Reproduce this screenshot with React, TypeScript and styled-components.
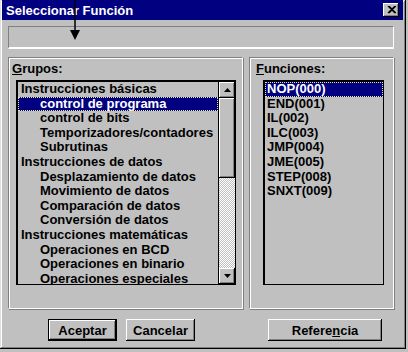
import styled, { createGlobalStyle } from 'styled-components'

const Global = createGlobalStyle`
  body {
    margin: 0;
    background: #c0c0c0;
    font-family: "Liberation Sans", Arial, sans-serif;
  }
`

const Window = styled.div`
  position: relative;
  width: 406px;
  height: 349px;
  background: #c0c0c0;
  box-shadow: inset -1px -1px 0 #000, inset 1px 1px 0 #dfdfdf, inset -2px -2px 0 #808080, inset 2px 2px 0 #fff;
  display: flex;
  flex-direction: column;
`

const TitleBar = styled.div`
  height: 20px;
  margin: 0 3px 0 2px;
  background: #000080;
  display: flex;
  align-items: center;
  justify-content: space-between;
  padding: 0 4px 0 4px;
  color: #fff;
  font-weight: bold;
  font-size: 13px;
`

const CloseBtn = styled.div`
  width: 16px;
  height: 14px;
  background: #c0c0c0;
  box-shadow: inset -1px -1px 0 #000, inset 1px 1px 0 #fff, inset -2px -2px 0 #808080;
  display: flex;
  align-items: center;
  justify-content: center;
`

const Field = styled.div`
  margin: 6px 0 0 8px;
  width: 386px;
  height: 23px;
  box-sizing: border-box;
  border-top: 1px solid #808080;
  border-left: 1px solid #808080;
  border-right: 1px solid #fff;
  border-bottom: 2px solid #fff;
`

const PanelRow = styled.div`
  display: flex;
  gap: 6px;
  margin: 8px 0 0 8px;
`

const Panel = styled.div<{ $w: number; $pad: number; $listPad: number }>`
  width: ${p => p.$w}px;
  height: 252px;
  box-sizing: border-box;
  border-top: 1px solid #808080;
  border-left: 1px solid #808080;
  border-right: 1px solid #fff;
  border-bottom: 1px solid #fff;
  box-shadow: inset 1px 1px 0 #fff, 1px 1px 0 #808080;
  padding: 4px 0 0 ${p => p.$pad}px;
  display: flex;
  flex-direction: column;
  & > div:last-child {
    margin-left: ${p => p.$listPad}px;
  }
`

const Label = styled.div`
  font-size: 13px;
  font-weight: bold;
  line-height: 14px;
  height: 18px;
  color: #000;
  u { text-decoration: underline; }
`

const ListBox = styled.div<{ $w: number }>`
  width: ${p => p.$w}px;
  height: 205px;
  box-sizing: border-box;
  border-top: 2px solid #000;
  border-left: 2px solid #000;
  border-right: 1px solid #000;
  border-bottom: 1px solid #000;
  display: flex;
  overflow: hidden;
`

const Items = styled.ul`
  list-style: none;
  margin: 0;
  padding: 0;
  flex: 1;
  min-width: 0;
`

const Item = styled.li<{ $indent: number; $sel?: boolean }>`
  height: 14.6px;
  line-height: 14.6px;
  font-size: 13px;
  font-weight: bold;
  white-space: nowrap;
  padding-left: ${p => p.$indent}px;
  box-sizing: border-box;
  background: ${p => (p.$sel ? '#000080' : 'transparent')};
  color: ${p => (p.$sel ? '#fff' : '#000')};
  outline: ${p => (p.$sel ? '1px dotted #e8e8a0' : 'none')};
  outline-offset: -1px;
`

const ScrollBar = styled.div`
  width: 16px;
  display: flex;
  flex-direction: column;
  border-left: 1px solid #000;
`

const ArrowBtn = styled.div`
  height: 16px;
  background: #c0c0c0;
  box-shadow: inset -1px -1px 0 #000, inset 1px 1px 0 #fff, inset -2px -2px 0 #808080;
  display: flex;
  align-items: center;
  justify-content: center;
`

const Thumb = styled.div`
  height: 80px;
  background: #c0c0c0;
  box-shadow: inset -1px -1px 0 #000, inset 1px 1px 0 #fff, inset -2px -2px 0 #808080;
`

const Track = styled.div`
  flex: 1;
  background: repeating-conic-gradient(#fff 0 25%, #c0c0c0 0 50%) 0 0 / 2px 2px;
`

const ButtonRow = styled.div`
  display: flex;
  margin: 10px 0 0 48px;
`

const Button = styled.div<{ $w: number; $gap: number; $def?: boolean }>`
  width: ${p => p.$w}px;
  height: 22px;
  margin-left: ${p => p.$gap}px;
  box-sizing: border-box;
  display: flex;
  align-items: center;
  justify-content: center;
  font-size: 13px;
  font-weight: bold;
  color: #000;
  background: #c0c0c0;
  box-shadow: ${p =>
    p.$def
      ? 'inset 0 0 0 1px #000, inset -2px -2px 0 #000, inset 2px 2px 0 #fff, inset -3px -3px 0 #808080'
      : 'inset -1px -1px 0 #000, inset 1px 1px 0 #fff, inset -2px -2px 0 #808080'};
`

const Pointer = styled.svg`
  position: absolute;
  left: 68px;
  top: 0;
`

const groups: [string, number][] = [
  ['Instrucciones básicas', 3],
  ['control de programa', 22],
  ['control de bits', 22],
  ['Temporizadores/contadores', 22],
  ['Subrutinas', 22],
  ['Instrucciones de datos', 3],
  ['Desplazamiento de datos', 22],
  ['Movimiento de datos', 22],
  ['Comparación de datos', 22],
  ['Conversión de datos', 22],
  ['Instrucciones matemáticas', 3],
  ['Operaciones en BCD', 22],
  ['Operaciones en binario', 22],
  ['Operaciones especiales', 22],
]

const funcs = ['NOP(000)', 'END(001)', 'IL(002)', 'ILC(003)', 'JMP(004)', 'JME(005)', 'STEP(008)', 'SNXT(009)']

export default function App() {
  return (
    <>
      <Global />
      <Window>
        <TitleBar>
          <span>Seleccionar Función</span>
          <CloseBtn>
            <svg width="9" height="8" viewBox="0 0 9 8">
              <path d="M1 0 L8 7 M2 0 L9 7 M8 0 L1 7 M9 0 L2 7" stroke="#000" strokeWidth="1.2" />
            </svg>
          </CloseBtn>
        </TitleBar>
        <Field />
        <PanelRow>
          <Panel $w={235} $pad={3} $listPad={4}>
            <Label><u>G</u>rupos:</Label>
            <ListBox $w={220}>
              <Items>
                {groups.map(([t, ind], i) => (
                  <Item key={t} $indent={ind} $sel={i === 1}>{t}</Item>
                ))}
              </Items>
              <ScrollBar>
                <ArrowBtn>
                  <svg width="7" height="4" viewBox="0 0 7 4"><path d="M3.5 0 L7 4 L0 4 Z" fill="#000" /></svg>
                </ArrowBtn>
                <Thumb />
                <Track />
                <ArrowBtn>
                  <svg width="7" height="4" viewBox="0 0 7 4"><path d="M0 0 L7 0 L3.5 4 Z" fill="#000" /></svg>
                </ArrowBtn>
              </ScrollBar>
            </ListBox>
          </Panel>
          <Panel $w={145} $pad={6} $listPad={7}>
            <Label><u>F</u>unciones:</Label>
            <ListBox $w={121}>
              <Items>
                {funcs.map((t, i) => (
                  <Item key={t} $indent={2} $sel={i === 0}>{t}</Item>
                ))}
              </Items>
            </ListBox>
          </Panel>
        </PanelRow>
        <ButtonRow>
          <Button $w={69} $gap={0} $def>Aceptar</Button>
          <Button $w={69} $gap={9}>Cancelar</Button>
          <Button $w={114} $gap={73}>Refere<u>n</u>cia</Button>
        </ButtonRow>
        <Pointer width="14" height="42" viewBox="0 0 14 42">
          <line x1="7" y1="0" x2="7" y2="31" stroke="#000" strokeWidth="1.5" />
          <path d="M2 30 L12 30 L7 40 Z" fill="#000" />
        </Pointer>
      </Window>
    </>
  )
}
